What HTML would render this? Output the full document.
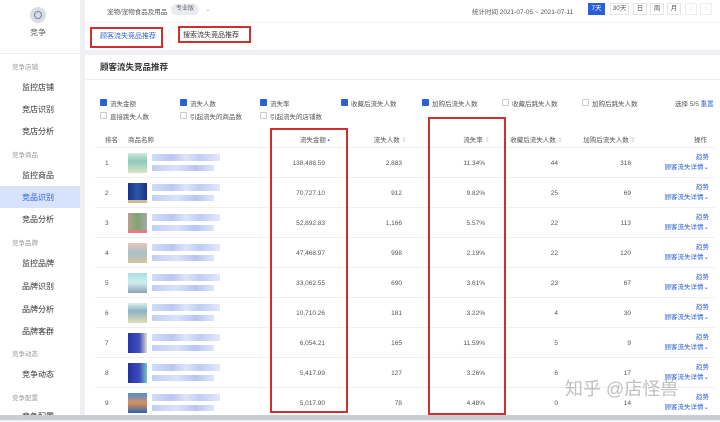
<!DOCTYPE html><html><head><meta charset="utf-8"><style>
*{margin:0;padding:0;box-sizing:border-box}
body{width:720px;height:420px;overflow:hidden;background:#eef0f3;font-family:"Liberation Sans","Noto Sans CJK SC",sans-serif;color:#333;position:relative}
.a{position:absolute;white-space:nowrap}
.sb{position:absolute;left:0;top:0;width:80px;height:420px;background:#fff}
.sb .g{position:absolute;left:12px;font-size:6.5px;color:#999}
.sb .i{position:absolute;left:22px;font-size:8px;color:#333}
.t{font-size:6.5px;color:#555}
.cb{position:absolute;width:7px;height:7px;border:1px solid #ccc;background:#fff;border-radius:1px}
.cb.on{background:#2c5fd6;border-color:#2c5fd6}
.row{position:absolute;left:95px;width:620px;height:30px;border-bottom:1px solid #f0f0f0}
.c{position:absolute;font-size:6.5px;color:#555;top:12px}
.r{text-align:right}
.op{position:absolute;right:6px;top:5px;font-size:6.5px;color:#2c5fd6;text-align:right;line-height:10px}
.th{position:absolute;width:19px;height:20px;top:5px;left:33px}
.bl{position:absolute;left:57px;top:6px;width:68px;height:7px;background:linear-gradient(90deg,#c9d6f7,#aebff0 30%,#d7e0fa 50%,#b3c4f2 70%,#dde5fb);opacity:.85}
.bl2{position:absolute;left:57px;top:17px;width:62px;height:6px;background:linear-gradient(90deg,#b6c7f3,#d4ddf9 40%,#a9bcef 70%,#d9e2fa);opacity:.85}
.red{position:absolute;border:2px solid #d0302b}
</style></head><body>
<div class="sb">
<div class="a" style="left:30px;top:7px;width:16px;height:16px;border-radius:50%;background:#d9dde6"></div>
<div class="a" style="left:34px;top:11px;width:8px;height:8px;border-radius:50%;border:1px solid #7a8396"></div>
<div class="a" style="left:30px;top:27px;font-size:8px;color:#666">竞争</div>
<div class="a" style="left:0;top:53px;width:80px;height:1px;background:#eee"></div>
<div class="g" style="top:61px">竞争店铺</div>
<div class="i" style="top:82px">监控店铺</div>
<div class="i" style="top:104px">竞店识别</div>
<div class="i" style="top:126px">竞店分析</div>
<div class="g" style="top:149px">竞争商品</div>
<div class="i" style="top:170px">监控商品</div>
<div class="a" style="left:0;top:186px;width:80px;height:22px;background:#d7e3fb"></div>
<div class="i" style="top:192px;color:#2c5fd6">竞品识别</div>
<div class="i" style="top:214px">竞品分析</div>
<div class="g" style="top:237px">竞争品牌</div>
<div class="i" style="top:258px">监控品牌</div>
<div class="i" style="top:281px">品牌识别</div>
<div class="i" style="top:304px">品牌分析</div>
<div class="i" style="top:326px">品牌客群</div>
<div class="g" style="top:348px">竞争动态</div>
<div class="i" style="top:369px">竞争动态</div>
<div class="g" style="top:392px">竞争配置</div>
<div class="i" style="top:411px">竞争配置</div>
</div>
<!-- top header -->
<div class="a" style="left:85px;top:0;width:635px;height:50px;background:#fff"></div>
<div class="a" style="left:85px;top:22px;width:635px;height:1px;background:#f2f2f2"></div>
<div class="a t" style="left:107px;top:6px">宠物/宠物食品及用品</div>
<div class="a" style="left:171px;top:4px;width:28px;height:11px;border-radius:6px;background:#e8ebf0;font-size:6px;color:#666;text-align:center;line-height:11px">专业版</div>
<div class="a t" style="left:205px;top:5px;color:#aaa">⌄</div>
<div class="a t" style="left:472px;top:6px">统计时间 2021-07-05 ~ 2021-07-11</div>
<div class="a" style="left:588px;top:3px;width:17px;height:12px;background:#2c5fd6;color:#fff;font-size:6.5px;text-align:center;line-height:12px">7天</div>
<div class="a" style="left:610px;top:3px;width:19px;height:12px;border:1px solid #e5e5e5;font-size:6.5px;text-align:center;line-height:10px;color:#555">30天</div>
<div class="a" style="left:633px;top:3px;width:14px;height:12px;border:1px solid #e5e5e5;font-size:6.5px;text-align:center;line-height:10px;color:#555">日</div>
<div class="a" style="left:650px;top:3px;width:14px;height:12px;border:1px solid #e5e5e5;font-size:6.5px;text-align:center;line-height:10px;color:#555">周</div>
<div class="a" style="left:667px;top:3px;width:14px;height:12px;border:1px solid #e5e5e5;font-size:6.5px;text-align:center;line-height:10px;color:#555">月</div>
<div class="a" style="left:685px;top:3px;width:12px;height:12px;border:1px solid #eee;font-size:6px;text-align:center;line-height:10px;color:#ccc">‹</div>
<div class="a" style="left:700px;top:3px;width:12px;height:12px;border:1px solid #eee;font-size:6px;text-align:center;line-height:10px;color:#ccc">›</div>
<div class="a" style="left:100px;top:31px;font-size:7px;color:#2c5fd6">顾客流失竞品推荐</div>
<div class="a" style="left:183px;top:30px;font-size:7px;color:#333">搜索流失竞品推荐</div>
<div class="red" style="left:90px;top:27px;width:73px;height:21px"></div>
<div class="red" style="left:178px;top:26px;width:73px;height:17px"></div>
<!-- panel -->
<div class="a" style="left:85px;top:55px;width:635px;height:360px;background:#fff"></div>
<div class="a" style="left:100px;top:61px;font-size:8.5px;font-weight:bold;color:#333">顾客流失竞品推荐</div>
<div class="a" style="left:85px;top:79px;width:635px;height:1px;background:#eee"></div>
<div class="cb on" style="left:100px;top:99px"></div><div class="a t" style="left:110px;top:98px">流失金额</div>
<div class="cb on" style="left:180px;top:99px"></div><div class="a t" style="left:190px;top:98px">流失人数</div>
<div class="cb on" style="left:260px;top:99px"></div><div class="a t" style="left:270px;top:98px">流失率</div>
<div class="cb on" style="left:341px;top:99px"></div><div class="a t" style="left:351px;top:98px">收藏后流失人数</div>
<div class="cb on" style="left:422px;top:99px"></div><div class="a t" style="left:432px;top:98px">加购后流失人数</div>
<div class="cb" style="left:502px;top:99px"></div><div class="a t" style="left:512px;top:98px">收藏后跳失人数</div>
<div class="cb" style="left:582px;top:99px"></div><div class="a t" style="left:592px;top:98px">加购后跳失人数</div>
<div class="a t" style="left:675px;top:98px">选择 5/5 <span style="color:#2c5fd6">重置</span></div>
<div class="cb" style="left:100px;top:112px"></div><div class="a t" style="left:110px;top:111px">直接跳失人数</div>
<div class="cb" style="left:180px;top:112px"></div><div class="a t" style="left:190px;top:111px">引起流失的商品数</div>
<div class="cb" style="left:260px;top:112px"></div><div class="a t" style="left:270px;top:111px">引起流失的店铺数</div>
<div class="row" style="top:128px;height:20px">
<div class="c" style="left:10px;top:6px">排名</div><div class="c" style="left:33px;top:6px">商品名称</div>
<div class="c r" style="right:385px;top:6px">流失金额 <span style="color:#2c5fd6">⬩</span></div>
<div class="c r" style="right:308px;top:6px">流失人数 <span style="color:#ccc">⇕</span></div>
<div class="c r" style="right:225px;top:6px">流失率 <span style="color:#ccc">⇕</span></div>
<div class="c r" style="right:152px;top:6px">收藏后流失人数 <span style="color:#ccc">⇕</span></div>
<div class="c r" style="right:79px;top:6px">加购后流失人数 <span style="color:#ccc">⇕</span></div>
<div class="c r" style="right:8px;top:6px">操作</div>
</div>
<div class="row" style="top:148px"><div class="c" style="left:10px">1</div><div class="th" style="background:linear-gradient(#cfe8e0,#8fc9b8 40%,#d9e6c7)"></div><div class="bl"></div><div class="bl2"></div><div class="c r" style="right:390px">138,488.59</div><div class="c r" style="right:313px">2,883</div><div class="c r" style="right:230px">11.34%</div><div class="c r" style="right:157px">44</div><div class="c r" style="right:84px">318</div><div class="op">趋势<br>顾客流失详情⌄</div></div>
<div class="row" style="top:178px"><div class="c" style="left:10px">2</div><div class="th" style="background:linear-gradient(90deg,#1d2f8a,#2a59a8 50%,#1d2f8a);border-bottom:3px solid #d4b98f"></div><div class="bl"></div><div class="bl2"></div><div class="c r" style="right:390px">70,727.10</div><div class="c r" style="right:313px">912</div><div class="c r" style="right:230px">9.82%</div><div class="c r" style="right:157px">25</div><div class="c r" style="right:84px">69</div><div class="op">趋势<br>顾客流失详情⌄</div></div>
<div class="row" style="top:208px"><div class="c" style="left:10px">3</div><div class="th" style="background:linear-gradient(90deg,#b9a094,#7ea56f 50%,#a4a9a8);border-bottom:3px solid #e67c82"></div><div class="bl"></div><div class="bl2"></div><div class="c r" style="right:390px">52,892.83</div><div class="c r" style="right:313px">1,166</div><div class="c r" style="right:230px">5.57%</div><div class="c r" style="right:157px">22</div><div class="c r" style="right:84px">113</div><div class="op">趋势<br>顾客流失详情⌄</div></div>
<div class="row" style="top:238px"><div class="c" style="left:10px">4</div><div class="th" style="background:linear-gradient(#e8c7b5,#a8bfc9 50%,#d8c39f)"></div><div class="bl"></div><div class="bl2"></div><div class="c r" style="right:390px">47,468.97</div><div class="c r" style="right:313px">998</div><div class="c r" style="right:230px">2.19%</div><div class="c r" style="right:157px">22</div><div class="c r" style="right:84px">120</div><div class="op">趋势<br>顾客流失详情⌄</div></div>
<div class="row" style="top:268px"><div class="c" style="left:10px">5</div><div class="th" style="background:linear-gradient(#a9e0e3,#d0ecef 50%,#8aa0b6)"></div><div class="bl"></div><div class="bl2"></div><div class="c r" style="right:390px">33,062.55</div><div class="c r" style="right:313px">690</div><div class="c r" style="right:230px">3.61%</div><div class="c r" style="right:157px">23</div><div class="c r" style="right:84px">67</div><div class="op">趋势<br>顾客流失详情⌄</div></div>
<div class="row" style="top:298px"><div class="c" style="left:10px">6</div><div class="th" style="background:linear-gradient(#d6efe9,#8fb2c4 40%,#e2dfb4)"></div><div class="bl"></div><div class="bl2"></div><div class="c r" style="right:390px">10,710.26</div><div class="c r" style="right:313px">181</div><div class="c r" style="right:230px">3.22%</div><div class="c r" style="right:157px">4</div><div class="c r" style="right:84px">30</div><div class="op">趋势<br>顾客流失详情⌄</div></div>
<div class="row" style="top:328px"><div class="c" style="left:10px">7</div><div class="th" style="background:linear-gradient(90deg,#2735a0,#4050c0 60%,#e0ddd0)"></div><div class="bl"></div><div class="bl2"></div><div class="c r" style="right:390px">6,054.21</div><div class="c r" style="right:313px">165</div><div class="c r" style="right:230px">11.59%</div><div class="c r" style="right:157px">5</div><div class="c r" style="right:84px">9</div><div class="op">趋势<br>顾客流失详情⌄</div></div>
<div class="row" style="top:358px"><div class="c" style="left:10px">8</div><div class="th" style="background:linear-gradient(90deg,#223199,#3b4cc0 60%,#78c6c0)"></div><div class="bl"></div><div class="bl2"></div><div class="c r" style="right:390px">5,417.99</div><div class="c r" style="right:313px">127</div><div class="c r" style="right:230px">3.26%</div><div class="c r" style="right:157px">6</div><div class="c r" style="right:84px">17</div><div class="op">趋势<br>顾客流失详情⌄</div></div>
<div class="row" style="top:388px"><div class="c" style="left:10px">9</div><div class="th" style="background:linear-gradient(#4b8fd6,#d98f5a 50%,#2d63b0)"></div><div class="bl"></div><div class="bl2"></div><div class="c r" style="right:390px">5,017.90</div><div class="c r" style="right:313px">78</div><div class="c r" style="right:230px">4.48%</div><div class="c r" style="right:157px">0</div><div class="c r" style="right:84px">14</div><div class="op">趋势<br>顾客流失详情⌄</div></div>
<div class="red" style="left:270px;top:128px;width:78px;height:285px"></div>
<div class="red" style="left:428px;top:117px;width:78px;height:298px"></div>
<div class="a" style="left:565px;top:375px;font-size:18px;color:rgba(140,140,140,.55)">知乎 @店怪兽</div>
<div class="a" style="left:0;top:415px;width:720px;height:5px;background:#c9ccd1"></div>
</body></html>
